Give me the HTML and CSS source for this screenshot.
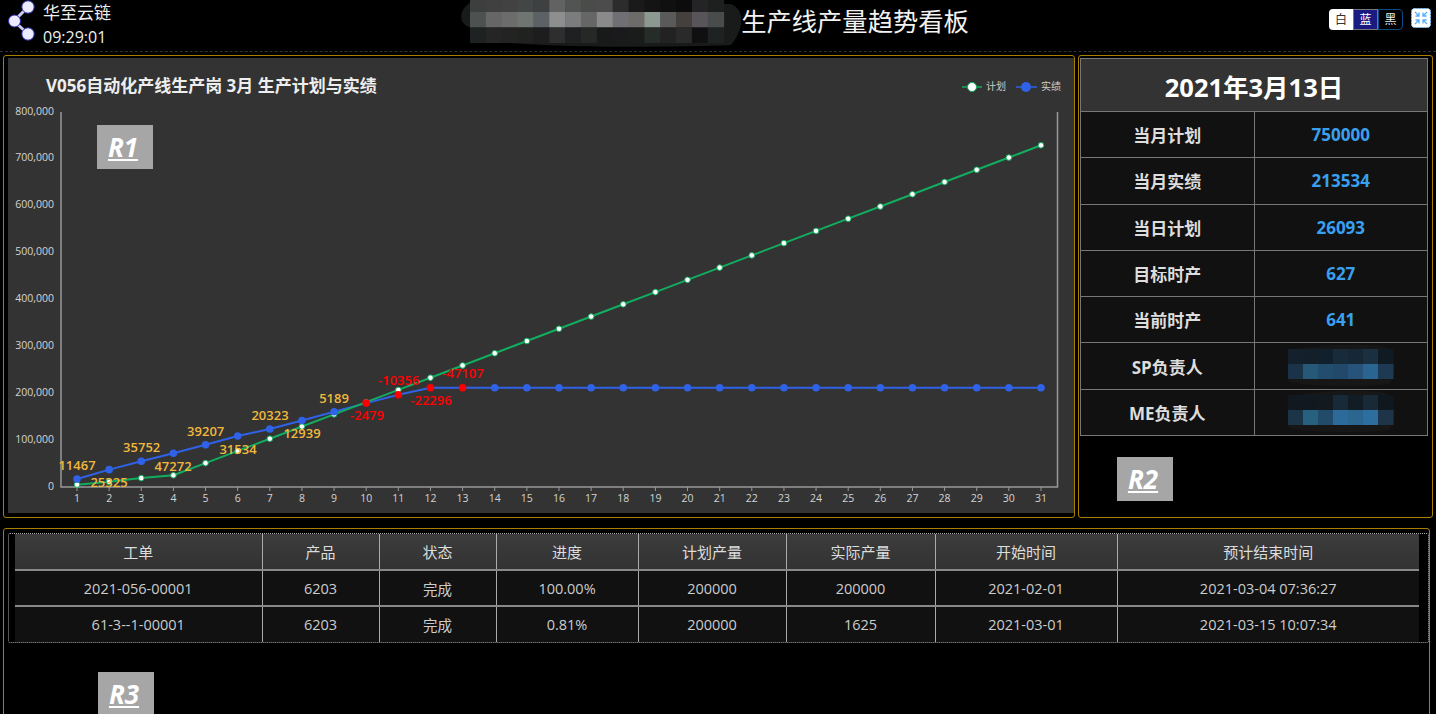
FILE: index.html
```html
<!DOCTYPE html>
<html lang="zh-CN">
<head>
    <meta charset="UTF-8">
    <meta name="viewport" content="width=device-width, initial-scale=1.0">
    <title>生产线产量趋势看板</title>
    <link rel="stylesheet" href="styles.css">
</head>
<body>
    <header class="topbar">
        <div class="brand">
            <svg class="brand-icon" width="30" height="42" viewBox="0 0 30 42">
                <path d="M20 7 L6 21 L20 34" fill="none" stroke="#c9c9f2" stroke-width="3"/>
                <circle cx="20" cy="7" r="6.2" fill="#ecebff" stroke="#2b2bb0" stroke-width="1"/>
                <circle cx="6.5" cy="21" r="6" fill="#ecebff" stroke="#2b2bb0" stroke-width="1"/>
                <circle cx="20" cy="34" r="6.2" fill="#ecebff" stroke="#2b2bb0" stroke-width="1"/>
            </svg>
            <div class="brand-text">
                <div class="brand-name">华至云链</div>
                <div class="brand-time">09:29:01</div>
            </div>
        </div>
        <div class="headline">
            <svg id="title-mosaic" class="title-mosaic" width="286" height="48" viewBox="0 0 286 48"></svg>
            <h1>生产线产量趋势看板</h1>
        </div>
        <div class="tools">
            <div class="theme-switch">
                <span class="theme-white">白</span>
                <span class="theme-blue">蓝</span>
                <span class="theme-black">黑</span>
            </div>
            <svg class="fullscreen" width="20" height="20" viewBox="0 0 20 20">
                <rect x="0.5" y="0.5" width="19" height="19" rx="3" fill="#fff" stroke="#7cc4ff" stroke-dasharray="2 1"/>
                <path d="M4 4 L8 8 M8 4.5 V8 H4.5 M16 4 L12 8 M12 4.5 V8 H15.5 M4 16 L8 12 M8 15.5 V12 H4.5 M16 16 L12 12 M12 15.5 V12 H15.5" fill="none" stroke="#54b0ff" stroke-width="1.3"/>
            </svg>
        </div>
    </header>

    <main class="board">
        <div class="top-row">
            <section class="panel panel-chart">
                <svg id="chart" class="chart" width="1066" height="455" viewBox="8 58 1066 455"></svg>
                <div class="region-tag tag-r1">R1</div>
            </section>
            <section class="panel panel-info">
                <table class="info-table">
                    <tbody>
                        <tr class="info-date"><th colspan="2">2021年3月13日</th></tr>
                        <tr><th>当月计划</th><td>750000</td></tr>
                        <tr><th>当月实绩</th><td>213534</td></tr>
                        <tr><th>当日计划</th><td>26093</td></tr>
                        <tr><th>目标时产</th><td>627</td></tr>
                        <tr><th>当前时产</th><td>641</td></tr>
                        <tr><th>SP负责人</th><td><svg id="mosaic-sp" class="name-mosaic" width="112" height="44" viewBox="0 0 112 44"></svg></td></tr>
                        <tr><th>ME负责人</th><td><svg id="mosaic-me" class="name-mosaic" width="112" height="44" viewBox="0 0 112 44"></svg></td></tr>
                    </tbody>
                </table>
                <div class="region-tag tag-r2">R2</div>
            </section>
        </div>

        <section class="panel panel-orders">
            <div class="orders-wrap">
                <table class="orders-table">
                    <thead>
                        <tr>
                            <th class="col-order">工单</th>
                            <th class="col-product">产品</th>
                            <th class="col-status">状态</th>
                            <th class="col-progress">进度</th>
                            <th class="col-plan">计划产量</th>
                            <th class="col-actual">实际产量</th>
                            <th class="col-start">开始时间</th>
                            <th>预计结束时间</th>
                        </tr>
                    </thead>
                    <tbody>
                        <tr>
                            <td>2021-056-00001</td>
                            <td>6203</td>
                            <td>完成</td>
                            <td>100.00%</td>
                            <td>200000</td>
                            <td>200000</td>
                            <td>2021-02-01</td>
                            <td>2021-03-04 07:36:27</td>
                        </tr>
                        <tr>
                            <td>61-3--1-00001</td>
                            <td>6203</td>
                            <td>完成</td>
                            <td>0.81%</td>
                            <td>200000</td>
                            <td>1625</td>
                            <td>2021-03-01</td>
                            <td>2021-03-15 10:07:34</td>
                        </tr>
                    </tbody>
                </table>
            </div>
            <div class="region-tag tag-r3">R3</div>
        </section>
    </main>

    <script src="app.js"></script>
</body>
</html>
```

FILE: styles.css
```css
* {
    box-sizing: border-box;
}

html, body {
    margin: 0;
    padding: 0;
    height: 714px;
    overflow: hidden;
    background-color: #000;
    color: #ddd;
    font-family: "Open Sans", "Noto Sans CJK SC", sans-serif;
}

/* Thanh tiêu đề */
.topbar {
    display: grid;
    grid-template-columns: 1fr auto 1fr;
    height: 52px;
    border-bottom: 1px dashed #333;
}

.brand {
    display: flex;
    padding-left: 8px;
}

.brand-text {
    margin-left: 5px;
    color: #eee;
}

.brand-name {
    font-size: 17px;
    line-height: 26px;
}

.brand-time {
    font-size: 16px;
    line-height: 22px;
}

.headline {
    display: flex;
    margin-left: -12px;
}

.title-mosaic {
    display: block;
}

.headline h1 {
    margin: 0;
    font-size: 25.3px;
    font-weight: 400;
    line-height: 42px;
    color: #f2f2f2;
}

.tools {
    display: flex;
    justify-content: flex-end;
    padding: 8px 5px 0 0;
}

.theme-switch {
    display: flex;
    height: 21px;
    margin-top: 1px;
    margin-right: 8px;
    font-size: 12px;
    line-height: 19px;
    text-align: center;
}

.theme-switch span {
    width: 25px;
    border: 1px solid transparent;
}

.theme-white {
    width: 24px !important;
    background-color: #fff;
    color: #333;
    border-radius: 4px 0 0 4px;
}

.theme-blue {
    background-color: #1a1a80;
    color: #fff;
    border-color: #777 !important;
}

.theme-black {
    color: #eee;
    border-color: #0b4b84 !important;
    border-radius: 0 4px 4px 0;
}

/* Các khung */
.board {
    padding: 3px 3px 0;
}

.top-row {
    display: flex;
    gap: 3px;
}

.panel {
    position: relative;
    border: 1px solid #a88000;
    border-radius: 3px;
}

.panel-chart {
    width: 1072px;
    height: 463px;
    padding: 2px 0 0 4px;
}

.chart {
    display: block;
    background-color: #333;
}

.panel-info {
    width: 355px;
    height: 463px;
    padding: 2px 0 0 1px;
}

.info-table {
    width: 348px;
    border-collapse: collapse;
    table-layout: fixed;
    background-color: #111;
    text-align: center;
}

.info-table th, .info-table td {
    height: 46.3px;
    border: 1px solid #777;
    padding: 0;
    font-size: 17px;
    font-weight: 700;
}

.info-table th {
    color: #ddd;
}

.info-table td {
    color: #39a0f0;
}

.info-table .info-date th {
    height: 53px;
    background-color: #333;
    color: #fff;
    font-size: 25.5px;
}

.name-mosaic {
    display: block;
    margin: 0 auto;
}

.panel-orders {
    width: 1427px;
    height: 220px;
    margin-top: 10px;
    padding: 4px 0 0 4px;
}

.orders-wrap {
    width: 1421px;
    height: 110px;
    padding-left: 6px;
    border: 1px dotted #aaa;
    border-radius: 2px;
}

.orders-table {
    width: 1404px;
    border-collapse: collapse;
    table-layout: fixed;
    background-color: #111;
    text-align: center;
}

.orders-table th, .orders-table td {
    height: 36px;
    padding: 0;
    border-left: 1px solid #aaa;
    border-bottom: 2px solid #888;
    font-size: 14.5px;
    font-weight: 400;
    color: #ccc;
}

.orders-table th {
    background: linear-gradient(#3c3c3c, #323232);
    color: #ddd;
    font-size: 15px;
}

.orders-table th:first-child, .orders-table td:first-child {
    border-left: none;
}

.orders-table tbody tr:last-child td {
    border-bottom: none;
}

.col-order { width: 247px; }
.col-product { width: 117px; }
.col-status { width: 117px; }
.col-progress { width: 142px; }
.col-plan { width: 148px; }
.col-actual { width: 149px; }
.col-start { width: 182px; }

/* Nhãn vùng */
.region-tag {
    position: absolute;
    width: 56px;
    height: 44px;
    padding-right: 4px;
    background-color: #a6a6a6;
    color: #fff;
    font-size: 26px;
    font-weight: 700;
    font-style: italic;
    line-height: 44px;
    text-align: center;
    text-decoration: underline;
}

.tag-r1 {
    left: 93px;
    top: 69px;
}

.tag-r2 {
    left: 38px;
    top: 401px;
}

.tag-r3 {
    left: 94px;
    top: 143px;
}

/* Chữ trong biểu đồ */
.chart text {
    font-family: "Open Sans", "Noto Sans CJK SC", sans-serif;
}

.chart-title {
    font-size: 17px;
    font-weight: 700;
    fill: #eee;
}

.legend-text {
    font-size: 10px;
    fill: #ccc;
}

.tick-y, .tick-x {
    font-size: 10.5px;
    fill: #d4d4d4;
}

.tick-y {
    text-anchor: end;
}

.tick-x {
    text-anchor: middle;
}

.point-label {
    font-size: 13px;
    font-weight: 600;
    text-anchor: middle;
    fill: #f0b83c;
}

.point-label.minus {
    fill: #f00;
}
```

FILE: app.js
```js
const SVG_NS = 'http://www.w3.org/2000/svg';

function add(parent, tag, attrs, text) {
    const el = document.createElementNS(SVG_NS, tag);
    for (const key in attrs) {
        el.setAttribute(key, attrs[key]);
    }
    if (text !== undefined) {
        el.textContent = text;
    }
    parent.appendChild(el);
    return el;
}

// Các ô che tên
function drawCells(svg, rows, startX, startY, cellW, cellH) {
    rows.forEach((row, r) => {
        row.forEach((color, c) => {
            add(svg, 'rect', {
                x: startX + c * cellW,
                y: startY + r * cellH,
                width: cellW + 0.5,
                height: cellH,
                fill: color
            });
        });
    });
}

const titleMosaic = document.getElementById('title-mosaic');
add(titleMosaic, 'path', {
    d: 'M20 0 H230 C260 4 262 4 275 4 C290 8 290 28 276 45 C200 48 60 48 20 38 L15 27 C3 25 2 8 20 0 Z',
    fill: '#191b1a'
});
drawCells(titleMosaic, [
    ['#3c3f3e', '#404040', '#424242', '#424644', '#3e4042', '#626262', '#525454', '#4a4c4a', '#4c4c4c', '#2c2c2c', '#1a1a1a', '#141414', '#101010', '#0c0c0c', '#242426', '#1e2020'],
    ['#4d5250', '#666666', '#6c6c6c', '#6f7571', '#5c6166', '#8e8e8e', '#7a7c7e', '#666666', '#8a8a8a', '#707074', '#6e6c68', '#8c9892', '#5a5a5a', '#45403e', '#58555a', '#484c4a'],
    ['#1f2222', '#252525', '#232323', '#202220', '#1d1d1d', '#2e2e2e', '#1e2022', '#262825', '#181a1a', '#1a1a1c', '#1a1c1c', '#262c28', '#222222', '#2a2a2a', '#101010', '#1f2222']
], 15, -3.5, 15.85, 15.5);

function drawName(id, rows) {
    const svg = document.getElementById(id);
    add(svg, 'path', {
        d: 'M8 6 C30 1 80 -1 100 3 C112 10 112 30 104 40 C70 44 20 42 4 38 L3 10 Z',
        fill: '#171717'
    });
    drawCells(svg, rows, 3, 5, 15, 15);
}

drawName('mosaic-sp', [
    ['#14212c', '#13202a', '#10202c', '#172b3a', '#162836', '#1a3040', '#0f1a22'],
    ['#1a3348', '#265878', '#224d6c', '#22486a', '#27527a', '#2a6490', '#1e3a52']
]);
drawName('mosaic-me', [
    ['#11181f', '#101820', '#121a20', '#182a38', '#121c24', '#182a38', '#10181f'],
    ['#1c3448', '#28607f', '#214b68', '#2c6a9a', '#2a6690', '#2c6e9e', '#1e3448']
]);

// Biểu đồ
const chart = document.getElementById('chart');
const GREEN = '#12ad5f';
const BLUE = '#2f62e6';
const xOf = day => 77 + (day - 1) * 32.133;
const yOf = value => 487 - value * 375 / 800000;

const plan = [5000, 11000, 19000, 25000, 51000, 77000, 103000, 129000, 155000, 181000];
for (let d = 11; d <= 31; d++) {
    plan.push(181000 + (d - 10) * 26093);
}
const actual = [17000, 37000, 54800, 72000, 90000, 108700, 123600, 142000, 160500, 179000, 196800, 211700];
while (actual.length < 31) {
    actual.push(211700);
}

add(chart, 'text', { class: 'chart-title', x: 46, y: 92 }, 'V056自动化产线生产岗 3月 生产计划与实绩');

// Chú thích
add(chart, 'line', { x1: 962, y1: 87, x2: 982, y2: 87, stroke: GREEN, 'stroke-width': 1.5 });
add(chart, 'circle', { cx: 972, cy: 87, r: 4.5, fill: '#fff', stroke: GREEN, 'stroke-width': 1 });
add(chart, 'text', { class: 'legend-text', x: 986, y: 90 }, '计划');
add(chart, 'line', { x1: 1016, y1: 87, x2: 1037, y2: 87, stroke: BLUE, 'stroke-width': 1.5 });
add(chart, 'circle', { cx: 1026, cy: 87, r: 5, fill: BLUE });
add(chart, 'text', { class: 'legend-text', x: 1041, y: 90 }, '实绩');

// Trục
for (let v = 0; v <= 800000; v += 100000) {
    add(chart, 'text', { class: 'tick-y', x: 54, y: yOf(v) + 2.5 }, v === 0 ? '0' : v.toLocaleString('en-US'));
}
const axis = { stroke: '#999', 'stroke-width': 1.5, fill: 'none' };
add(chart, 'path', Object.assign({ d: 'M61 112 V487 H1057.5 V112' }, axis));
for (let d = 1; d <= 31; d++) {
    add(chart, 'line', { x1: xOf(d), y1: 487, x2: xOf(d), y2: 491, stroke: '#999' });
    add(chart, 'text', { class: 'tick-x', x: xOf(d), y: 502 }, d);
}

// Đường dữ liệu
const points = list => list.map((v, i) => xOf(i + 1) + ',' + yOf(v)).join(' ');
add(chart, 'polyline', { points: points(actual), fill: 'none', stroke: BLUE, 'stroke-width': 2 });
add(chart, 'polyline', { points: points(plan), fill: 'none', stroke: GREEN, 'stroke-width': 2 });
plan.forEach((v, i) => {
    add(chart, 'circle', { cx: xOf(i + 1), cy: yOf(v), r: 2.8, fill: '#fff', stroke: GREEN, 'stroke-width': 1 });
});
actual.forEach((v, i) => {
    const late = i >= 9 && i <= 12;
    add(chart, 'circle', { cx: xOf(i + 1), cy: yOf(v), r: 3.8, fill: late ? '#f00' : BLUE });
});

const labels = [
    [77, 465, '11467'], [109, 482, '25325'], [141.7, 447, '35752'], [173, 466, '47272'],
    [205.7, 431, '39207'], [238, 449, '31534'], [270, 415, '20323'], [302, 433, '12939'],
    [334, 398, '5189'], [367, 415, '-2479'], [398.7, 380, '-10356'], [431, 400, '-22296'],
    [463, 373, '-47107']
];
labels.forEach(item => {
    const cls = item[2].startsWith('-') ? 'point-label minus' : 'point-label';
    add(chart, 'text', { class: cls, x: item[0], y: item[1] + 4.5 }, item[2]);
});
```
